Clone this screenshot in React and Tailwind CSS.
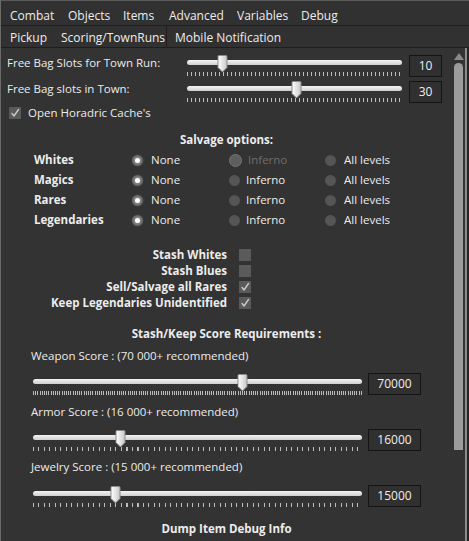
import React from 'react';

const font = { fontFamily: '"Open Sans", "Noto Sans", sans-serif' };

const Thumb = ({ pct }) => (
  <svg
    className="absolute top-[2px] -ml-[5px]"
    style={{ left: `${pct}%` }}
    width="11"
    height="18"
    viewBox="0 0 11 18"
  >
    <defs>
      <linearGradient id="tg" x1="0" y1="0" x2="1" y2="0">
        <stop offset="0" stopColor="#ffffff" />
        <stop offset="1" stopColor="#c8c8c8" />
      </linearGradient>
    </defs>
    <path d="M1 1.5 Q1 0.5 2 0.5 L9 0.5 Q10 0.5 10 1.5 L10 12.5 L5.5 17 L1 12.5 Z" fill="url(#tg)" stroke="#8a8a8a" strokeWidth="1" />
  </svg>
);

const Slider = ({ pct, ticks }) => (
  <div className="relative h-[24px] w-full">
    <div className="absolute left-0 right-0 top-[7px] h-[5px] rounded-full bg-gradient-to-b from-[#f4f4f4] to-[#cfcfcf]" />
    <div className={`absolute left-0 right-0 top-[19px] h-[4px] ${ticks}`} />
    <Thumb pct={pct} />
  </div>
);

const ValueBox = ({ value, w }) => (
  <div className={`${w} h-[22px] flex items-center justify-center border border-[#141414] bg-[#303030] text-[12px] text-[#eeeeee]`}>
    {value}
  </div>
);

const Check = ({ checked }) => (
  <div className="w-[12px] h-[12px] bg-[#5a5a5a] flex items-center justify-center">
    {checked && (
      <svg width="10" height="10" viewBox="0 0 10 10">
        <path d="M2 5.5 L4 8 L8.5 1.5" fill="none" stroke="#c8c8c8" strokeWidth="1.4" strokeLinecap="round" strokeLinejoin="round" />
      </svg>
    )}
  </div>
);

const Radio = ({ selected, disabled }) => {
  if (disabled)
    return <div className="w-[13px] h-[13px] rounded-full bg-[#5e5e5e] border border-[#767676]" />;
  return (
    <div className="w-[11px] h-[11px] rounded-full bg-[#555555] flex items-center justify-center">
      {selected && <div className="w-[5px] h-[5px] rounded-full bg-white shadow-[0_0_3px_2px_rgba(255,255,255,0.35)]" />}
    </div>
  );
};

const salvageRows = [
  { name: 'Whites', disabledInferno: true },
  { name: 'Magics' },
  { name: 'Rares' },
  { name: 'Legendaries' },
];

const stashRows = [
  { label: 'Stash Whites', checked: false },
  { label: 'Stash Blues', checked: false },
  { label: 'Sell/Salvage all Rares', checked: true },
  { label: 'Keep Legendaries Unidentified', checked: true },
];

const scores = [
  { label: 'Weapon Score : (70 000+ recommended)', value: '70000', pct: 63.5, ticks: 'bg-[repeating-linear-gradient(90deg,#bdbdbd_0_1px,transparent_1px_2.2px)]', gap: 'mt-[6px]', after: 'mt-[6px]' },
  { label: 'Armor Score : (16 000+ recommended)', value: '16000', pct: 26.5, ticks: 'bg-[repeating-linear-gradient(90deg,#bdbdbd_0_1px,transparent_1px_5.5px)]', gap: 'mt-[6px]', after: 'mt-[5px]' },
  { label: 'Jewelry Score : (15 000+ recommended)', value: '15000', pct: 25, ticks: 'bg-[repeating-linear-gradient(90deg,#bdbdbd_0_1px,transparent_1px_5.5px)]', gap: 'mt-[7px]', after: 'mt-[11px]' },
];

const tabWidths = ['w-[58px]', 'w-[55px]', 'w-[46px]', 'w-[68px]', 'w-[64px]', ''];

export default function App() {
  return (
    <div style={font} className="w-[469px] h-[541px] bg-[#333333] text-[#ececec] text-[11.5px] overflow-hidden flex flex-col border-t border-[#5a5a5a] border-l border-l-[#6a6a6a]">
      {/* Tabs */}
      <div className="h-[25px] flex items-center pt-[5px] border-b border-[#1e1e1e] bg-[#313131] pl-[9px] text-[12px]">
        {['Combat', 'Objects', 'Items', 'Advanced', 'Variables', 'Debug'].map((t, i) => (
          <div key={t} className={tabWidths[i]}>
            {t}
          </div>
        ))}
      </div>
      <div className="h-[22px] flex items-center border-b border-[#1e1e1e] bg-[#313131] pl-[9px] text-[12px]">
        <div className="w-[51px] pt-[2px]">Pickup</div>
        <div className="w-[106px] h-full flex items-center pt-[2px] border-r border-[#1e1e1e]">Scoring/TownRuns</div>
        <div className="pl-[8px] pt-[2px]">Mobile Notification</div>
      </div>

      <div className="flex flex-1 min-h-0">
        {/* Content */}
        <div className="w-[451px] flex flex-col pt-[4px]">
          {[
            { label: 'Free Bag Slots for Town Run:', value: '10', pct: 16.5 },
            { label: 'Free Bag slots in Town:', value: '30', pct: 50.5 },
          ].map((r) => (
            <div key={r.label} className="h-[26px] flex">
              <div className="w-[186px] pl-[6px] leading-[21px]">{r.label}</div>
              <div className="w-[215px] pt-[1px]">
                <Slider pct={r.pct} ticks="bg-[repeating-linear-gradient(90deg,#bdbdbd_0_1px,transparent_1px_4px)]" />
              </div>
              <div className="ml-[7px] pt-[3px]">
                <ValueBox value={r.value} w="w-[33px]" />
              </div>
            </div>
          ))}
          <div className="h-[18px] flex items-center pl-[8px] gap-[7px]">
            <Check checked />
            <span>Open Horadric Cache's</span>
          </div>

          <div className="mt-[8px] h-[20px] flex items-center justify-center font-bold">Salvage options:</div>
          {salvageRows.map((r) => (
            <div key={r.name} className="h-[20px] flex items-center">
              <div className="w-[131px] pl-[33px] font-bold">{r.name}</div>
              <div className="w-[97px] flex items-center gap-[8px]">
                <Radio selected />
                <span>None</span>
              </div>
              <div className="w-[96px] flex items-center gap-[6px]">
                {r.disabledInferno ? <Radio disabled /> : <Radio />}
                <span className={r.disabledInferno ? 'text-[#6e6e6e]' : ''}>Inferno</span>
              </div>
              <div className="flex items-center gap-[8px]">
                <Radio />
                <span>All levels</span>
              </div>
            </div>
          ))}

          <div className="mt-[17px] flex flex-col">
            {stashRows.map((r) => (
              <div key={r.label} className="h-[16px] flex items-center">
                <div className="w-[226px] text-right font-bold">{r.label}</div>
                <div className="ml-[12px]">
                  <Check checked={r.checked} />
                </div>
              </div>
            ))}
          </div>

          <div className="mt-[13px] h-[20px] flex items-center justify-center font-bold">Stash/Keep Score Requirements :</div>

          {scores.map((s, i) => (
            <div key={s.label} className={`flex flex-col ${i === 0 ? 'mt-[2px]' : ''}`}>
              <div className="h-[20px] flex items-center pl-[30px]">{s.label}</div>
              <div className={`h-[24px] flex items-center ${s.gap}`}>
                <div className="ml-[32px] w-[329px]">
                  <Slider pct={s.pct} ticks={s.ticks} />
                </div>
                <div className="ml-[6px]">
                  <ValueBox value={s.value} w="w-[53px]" />
                </div>
              </div>
              <div className={s.after} />
            </div>
          ))}

          <div className="h-[20px] flex items-center justify-center font-bold">Dump Item Debug Info</div>
        </div>

        {/* Scrollbar */}
        <div className="w-[13px] flex flex-col items-center pt-[5px]">
          <div className="w-0 h-0 border-l-[5px] border-r-[5px] border-b-[7px] border-l-transparent border-r-transparent border-b-[#8a8a8a]" />
          <div className="mt-[3px] w-[9px] h-[387px] rounded-t-full bg-[#9c9c9c]" />
        </div>
        <div className="w-[2px] bg-[#8a8a8a]" />
        <div className="flex-1 bg-[#222222]" />
      </div>
    </div>
  );
}
